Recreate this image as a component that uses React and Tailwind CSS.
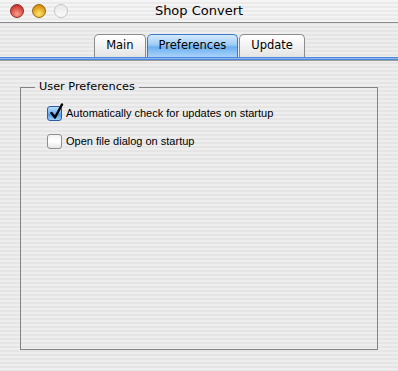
import React from 'react';

const stripes =
  'bg-[repeating-linear-gradient(180deg,#eeeeee_0px,#eeeeee_2px,#e5e5e5_2px,#e5e5e5_4px)]';

const Light = ({ from, to, ring }) => (
  <span
    className="block w-[14px] h-[14px] rounded-full border"
    style={{ background: `radial-gradient(circle at 50% 75%, ${to} 0%, ${from} 80%)`, borderColor: ring }}
  />
);

const Tab = ({ label, active }) =>
  active ? (
    <div className="h-[23px] px-[11px] flex items-center rounded-t-[5px] border border-b-0 border-[#3d78c7] bg-[linear-gradient(180deg,#d6ebfd_0%,#9ccbf6_45%,#6db0f0_55%,#a8d3fa_100%)] text-[11.5px] text-black">
      {label}
    </div>
  ) : (
    <div className="h-[23px] px-[11px] flex items-center rounded-t-[5px] border border-b-0 border-[#8c8c8c] bg-[linear-gradient(180deg,#ffffff_0%,#f2f2f2_50%,#e4e4e4_100%)] text-[11.5px] text-black">
      {label}
    </div>
  );

const Check = ({ checked, label }) => (
  <div className="flex items-center gap-[4px] h-[16px]">
    <span
      className={
        'relative w-[15px] h-[15px] rounded-[3px] border ' +
        (checked
          ? 'border-[#2d5da1] bg-[linear-gradient(180deg,#b8dcfb_0%,#6cb0f1_50%,#4a97e8_55%,#9fd0fb_100%)]'
          : 'border-[#8e8e8e] bg-[linear-gradient(180deg,#f4f4f4_0%,#ffffff_50%,#e6e6e6_100%)]')
      }
    >
      {checked && (
        <svg className="absolute left-[1px] top-[-4px]" width="15" height="17" viewBox="0 0 15 17">
          <path d="M2.5 10 L6 14.5 L13 1.5" fill="none" stroke="#000" strokeWidth="2.4" strokeLinecap="round" strokeLinejoin="round" />
        </svg>
      )}
    </span>
    <span className="text-[11px] text-black" style={{ fontFamily: '"Liberation Sans", Arial, sans-serif' }}>
      {label}
    </span>
  </div>
);

export default function App() {
  return (
    <div
      className={'w-[398px] h-[371px] overflow-hidden flex flex-col ' + stripes}
      style={{ fontFamily: '"DejaVu Sans", "Lucida Grande", sans-serif' }}
    >
      <div className="relative h-[23px] border-b border-[#8a8a8a] bg-[repeating-linear-gradient(180deg,#f4f4f4_0px,#f4f4f4_2px,#eaeaea_2px,#eaeaea_4px)] flex items-center">
        <div className="flex items-center gap-[8px] pl-[10px]">
          <Light from="#c7332c" to="#ff9c8a" ring="#8c2a24" />
          <Light from="#d58a0a" to="#ffe66a" ring="#99650d" />
          <span className="block w-[14px] h-[14px] rounded-full border border-[#c4c4c4] bg-[linear-gradient(180deg,#e8e8e8,#fafafa)]" />
        </div>
        <div className="absolute inset-0 flex items-center justify-center text-[13px] text-black">Shop Convert</div>
      </div>

      <div className="flex justify-center gap-[1px] mt-[11px] pl-[1px]">
        <Tab label="Main" />
        <Tab label="Preferences" active />
        <Tab label="Update" />
      </div>
      <div className="h-[3px] bg-[linear-gradient(180deg,#2f6ed0,#8ab8ef,#2f6ed0)]" />
      <div className="h-[1px] bg-[#9a9a9a]" />

      <fieldset className="mx-[20px] mt-[19px] h-[270px] border border-[#838383] px-[26px]">
        <legend className="ml-[-12px] px-[4px] text-[11.3px] text-black leading-[14px]">User Preferences</legend>
        <div className="flex flex-col gap-[12px] mt-[11px]">
          <Check checked label="Automatically check for updates on startup" />
          <Check label="Open file dialog on startup" />
        </div>
      </fieldset>
    </div>
  );
}
